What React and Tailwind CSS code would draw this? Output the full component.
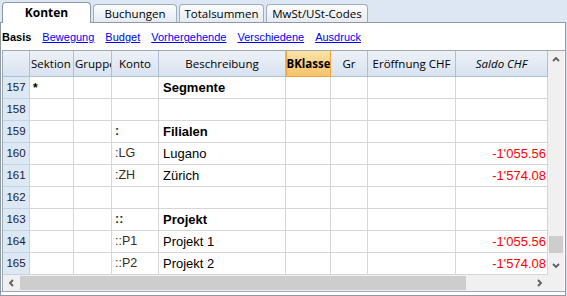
import React from 'react';

const cols = [
  { label: '', w: 27 },
  { label: 'Sektion', align: 'left' },
  { label: 'Gruppe', align: 'left' },
  { label: 'Konto' },
  { label: 'Beschreibung' },
  { label: 'BKlasse', hl: true },
  { label: 'Gr' },
  { label: 'Eröffnung CHF' },
  { label: 'Saldo CHF', italic: true },
];

const rows = [
  { n: 157, sek: '*', desc: 'Segmente', bold: true },
  { n: 158 },
  { n: 159, konto: ':', desc: 'Filialen', bold: true },
  { n: 160, konto: ':LG', desc: 'Lugano', saldo: "-1'055.56" },
  { n: 161, konto: ':ZH', desc: 'Zürich', saldo: "-1'574.08" },
  { n: 162 },
  { n: 163, konto: '::', desc: 'Projekt', bold: true },
  { n: 164, konto: '::P1', desc: 'Projekt 1', saldo: "-1'055.56" },
  { n: 165, konto: '::P2', desc: 'Projekt 2', saldo: "-1'574.08" },
];

const Chevron = ({ dir }) => {
  const d = {
    up: 'M1 5 L4 2 L7 5',
    down: 'M1 2 L4 5 L7 2',
    left: 'M5 1 L2 4 L5 7',
    right: 'M2 1 L5 4 L2 7',
  }[dir];
  return (
    <svg width="8" height="8" viewBox="0 0 8 8">
      <path d={d} fill="none" stroke="#5f5f5f" strokeWidth="1.8" />
    </svg>
  );
};

const Tab = ({ label, active, w }) =>
  active ? (
    <div
      className="h-[21px] -mb-px flex items-center justify-center border border-b-0 border-[#8d99a8] rounded-t-[4px] bg-white font-bold text-[12px] text-black z-10"
      style={{ width: w }}
    >
      {label}
    </div>
  ) : (
    <div
      className="h-[18px] flex items-center justify-center border border-b-0 border-[#a3adba] rounded-t-[4px] bg-gradient-to-b from-[#fbfcfd] to-[#e6ebf2] text-[11.5px] text-black"
      style={{ width: w }}
    >
      {label}
    </div>
  );

const App = () => {
  const cellBase = 'h-[22px] flex items-center border-r border-b border-[#d6d6d6] whitespace-nowrap overflow-hidden';

  return (
    <div
      className="w-[567px] h-[296px] bg-[#dde7f4] flex flex-col overflow-hidden"
      style={{ fontFamily: '"Liberation Sans", Arial, sans-serif' }}
    >
      {/* tabs */}
      <div className="h-[22px] flex items-end gap-[2px] pl-[2px]" style={{ fontFamily: '"Open Sans", "DejaVu Sans", sans-serif' }}>
        <Tab label="Konten" active w={89} />
        <Tab label="Buchungen" w={84} />
        <Tab label="Totalsummen" w={85} />
        <Tab label="MwSt/USt-Codes" w={102} />
      </div>

      {/* panel */}
      <div className="flex-1 flex flex-col bg-white border border-[#8d99a8] mr-px min-h-0">
        <div className="h-[27px] flex items-center gap-[11px] pl-[1px] pt-[2px] text-[11px]">
          <span className="font-bold text-black">Basis</span>
          <span className="text-[#0000ff] underline">Bewegung</span>
          <span className="text-[#0000ff] underline">Budget</span>
          <span className="text-[#0000ff] underline">Vorhergehende</span>
          <span className="text-[#0000ff] underline">Verschiedene</span>
          <span className="text-[#0000ff] underline">Ausdruck</span>
        </div>

        <div className="flex ml-px border-t border-l border-[#a0a7b0]">
          <div className="grid grid-cols-[27px_44px_38px_47px_127px_45px_37px_88px_92px] w-[545px]">
            {cols.map((c, i) => (
              <div
                key={i}
                className={
                  'h-[26px] flex items-center whitespace-nowrap overflow-hidden border-b text-black ' +
                  (c.hl
                    ? 'bg-gradient-to-b from-[#fbe3a6] to-[#f5c36a] border-x border-[#f0a33c] border-b-[#f0a33c] font-bold justify-center '
                    : 'bg-gradient-to-b from-[#edf2f9] to-[#d8e2ef] border-r border-[#aebfd4] ') +
                  (c.align === 'left' ? 'pl-[1px] ' : 'justify-center ') +
                  (c.italic ? 'italic ' : '')
                }
                style={{ fontFamily: '"Open Sans", "DejaVu Sans", sans-serif', fontSize: 11.5 }}
              >
                {c.label}
              </div>
            ))}
            {rows.map((r) => (
              <React.Fragment key={r.n}>
                <div className="h-[22px] flex items-center justify-center bg-[#dde8f5] border-r border-b border-[#c4d2e4] text-[11.5px] text-[#1e1830]">
                  {r.n}
                </div>
                <div className={cellBase + ' pl-[3px] text-[12px] text-black font-bold'}>{r.sek}</div>
                <div className={cellBase}></div>
                <div className={cellBase + ' pl-[3px] text-[12.5px] text-[#3b2c1c] ' + (r.bold ? 'font-bold' : '')}>{r.konto}</div>
                <div className={cellBase + ' pl-[4px] text-[13px] text-black ' + (r.bold ? 'font-bold' : '')}>{r.desc}</div>
                <div className={cellBase}></div>
                <div className={cellBase}></div>
                <div className={cellBase}></div>
                <div className={cellBase + ' justify-end pr-[1px] text-[13px] text-[#ff0000]'}>{r.saldo}</div>
              </React.Fragment>
            ))}
          </div>

          {/* vertical scrollbar */}
          <div className="w-[16px] bg-[#f0f0f0] flex flex-col items-center">
            <div className="h-[17px] flex items-center justify-center"><Chevron dir="up" /></div>
            <div className="flex-1 w-full flex flex-col justify-end pb-[4px]">
              <div className="h-[17px] mx-px bg-[#cdcdcd]"></div>
            </div>
            <div className="h-[18px] flex items-center justify-center"><Chevron dir="down" /></div>
          </div>
        </div>

        {/* horizontal scrollbar */}
        <div className="h-[16px] flex ml-px border-l border-[#a0a7b0]">
          <div className="w-[545px] flex bg-[#f0f0f0]">
            <div className="w-[17px] flex items-center justify-center"><Chevron dir="left" /></div>
            <div className="w-[446px] bg-[#cdcdcd] my-px"></div>
            <div className="flex-1 flex items-center justify-end pr-[4px]"><Chevron dir="right" /></div>
          </div>
          <div className="w-[16px] bg-[#f0f0f0]"></div>
        </div>
        <div className="flex-1 border-t border-[#a0a7b0]"></div>
      </div>
    </div>
  );
};

export default App;
